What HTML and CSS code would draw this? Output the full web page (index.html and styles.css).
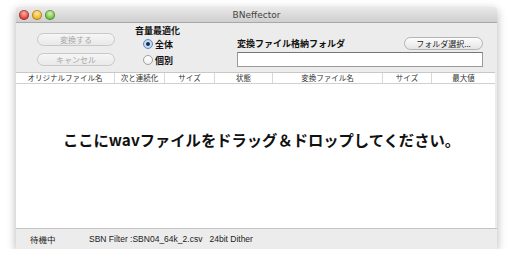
FILE: index.html
```html
<!DOCTYPE html>
<html lang="ja">
<head>
<meta charset="UTF-8">
<meta name="viewport" content="width=device-width, initial-scale=1.0">
<title>BNeffector</title>
<link rel="stylesheet" href="styles.css">
</head>
<body>

<div class="window">
    <div class="titlebar">
        <div class="lights">
            <span class="light red"></span>
            <span class="light yellow"></span>
            <span class="light green"></span>
        </div>
        <div class="title">BNeffector</div>
    </div>

    <div class="toolbar">
        <div class="actions">
            <div class="btn disabled">変換する</div>
            <div class="btn disabled">キャンセル</div>
        </div>
        <div class="radios">
            <div class="group-label">音量最適化</div>
            <div class="radio-row"><span class="radio checked"></span>全体</div>
            <div class="radio-row"><span class="radio"></span>個別</div>
        </div>
        <div class="folder">
            <div class="folder-head">
                <span class="folder-label">変換ファイル格納フォルダ</span>
                <div class="btn small">フォルダ選択...</div>
            </div>
            <div class="field"></div>
        </div>
    </div>

    <div class="list">
        <div class="list-head">
            <div class="col" style="width:99px">オリジナルファイル名</div>
            <div class="col" style="width:50px">次と連続化</div>
            <div class="col" style="width:50px">サイズ</div>
            <div class="col" style="width:58px">状態</div>
            <div class="col" style="width:110px">変換ファイル名</div>
            <div class="col" style="width:49px">サイズ</div>
            <div class="col last">最大値</div>
        </div>
        <div class="drop">ここにwavファイルをドラッグ＆ドロップしてください。</div>
    </div>

    <div class="statusbar">
        <span class="state">待機中</span>
        <span class="info">SBN Filter :SBN04_64k_2.csv&nbsp;&nbsp;&nbsp;24bit Dither</span>
    </div>
</div>

</body>
</html>
```

FILE: styles.css
```css
body {
    margin: 0;
    padding: 0;
    background-color: #fff;
    font-family: "Noto Sans CJK JP", "Noto Sans", sans-serif;
}
.window {
    margin: 7px 0 0 16px;
    width: 481px;
    height: 242px;
    display: flex;
    flex-direction: column;
    background-color: #ececec;
    box-shadow: 0 3px 10px rgba(0, 0, 0, 0.3);
    border-radius: 4px 4px 0 0;
    overflow: hidden;
}
.titlebar {
    height: 15px;
    flex: none;
    position: relative;
    display: flex;
    align-items: center;
    background: linear-gradient(#e9e9e9, #cfcfcf);
    border-bottom: 1px solid #a8a8a8;
}
.lights {
    display: flex;
    gap: 3px;
    padding-left: 3px;
}
.light {
    width: 10px;
    height: 10px;
    border-radius: 50%;
    box-shadow: inset 0 0 0 1px rgba(0, 0, 0, 0.25);
}
.red { background: radial-gradient(circle at 50% 35%, #ffb0a8, #e0443a 60%, #b52a20); }
.yellow { background: radial-gradient(circle at 50% 35%, #ffe9a0, #eeb32a 60%, #c48a10); }
.green { background: radial-gradient(circle at 50% 35%, #d4f5b0, #75c044 60%, #4d9a28); }
.title {
    position: absolute;
    left: 0;
    right: 0;
    text-align: center;
    font-family: "DejaVu Sans", sans-serif;
    font-size: 9px;
    color: #444;
}
.toolbar {
    height: 49px;
    flex: none;
    display: flex;
    padding-left: 21px;
    padding-right: 14px;
}
.actions {
    width: 78px;
    padding-top: 10px;
    display: flex;
    flex-direction: column;
    gap: 7px;
}
.btn {
    height: 11px;
    border: 1px solid #b4b4b4;
    border-radius: 7px;
    background: linear-gradient(#fdfdfd, #e4e4e4);
    font-size: 8px;
    line-height: 11px;
    text-align: center;
    color: #222;
}
.btn.disabled {
    color: #a8a8a8;
    border-color: #c8c8c8;
    background: linear-gradient(#f6f6f6, #e9e9e9);
}
.radios {
    width: 122px;
    padding-left: 20px;
    box-sizing: border-box;
    font-size: 9px;
    color: #111;
    font-weight: bold;
}
.group-label {
    line-height: 10px;
    margin-top: 3px;
}
.radio-row {
    display: flex;
    align-items: center;
    gap: 2px;
    margin-left: 8px;
    height: 16px;
}
.radio {
    width: 10px;
    height: 10px;
    box-sizing: border-box;
    border-radius: 50%;
    border: 1px solid #a0a0a0;
    background: linear-gradient(#fff, #f0f0f0);
    display: flex;
    align-items: center;
    justify-content: center;
}
.radio.checked {
    border-color: #5a88c4;
    background: radial-gradient(circle, #e8f2ff, #a9c9ee);
}
.radio.checked::after {
    content: "";
    width: 4px;
    height: 4px;
    border-radius: 50%;
    background-color: #1c2a40;
}
.folder {
    flex: 1;
    display: flex;
    flex-direction: column;
    padding-top: 14px;
}
.folder-head {
    display: flex;
    justify-content: space-between;
    align-items: center;
    height: 12px;
}
.folder-label {
    font-size: 9px;
    font-weight: bold;
    color: #111;
}
.btn.small {
    width: 77px;
}
.field {
    margin-top: 3px;
    height: 13px;
    background-color: #fff;
    border: 1px solid #9a9a9a;
    border-top-color: #777;
}
.list {
    flex: 1;
    display: flex;
    flex-direction: column;
    background-color: #fff;
    margin-right: 2px;
    border-top: 1px solid #c8c8c8;
}
.list-head {
    height: 10px;
    display: flex;
    border-bottom: 1px solid #d0d0d0;
    font-size: 7.5px;
    line-height: 10px;
    color: #333;
}
.col {
    text-align: center;
    border-right: 1px solid #d8d8d8;
    box-sizing: border-box;
    white-space: nowrap;
    overflow: hidden;
}
.col.last {
    flex: 1;
    border-right: none;
}
.drop {
    flex: 1;
    display: flex;
    align-items: center;
    justify-content: center;
    padding-bottom: 35px;
    padding-left: 12px;
    font-size: 15.3px;
    font-weight: bold;
    color: #111;
}
.statusbar {
    height: 20px;
    flex: none;
    display: flex;
    align-items: center;
    border-top: 1px solid #c4c4c4;
    font-size: 8.5px;
    color: #222;
}
.state {
    width: 73px;
    padding-left: 14px;
    box-sizing: border-box;
}
.info {
    font-family: "Liberation Sans", sans-serif;
}
```
